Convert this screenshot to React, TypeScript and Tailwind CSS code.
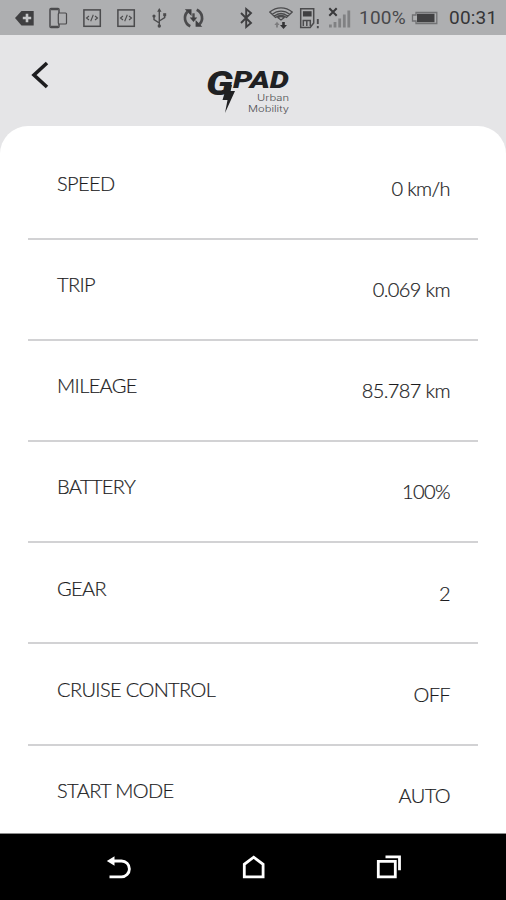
import type { ReactNode } from "react";

interface Reading {
  label: string;
  value: string;
}

const READINGS: Reading[] = [
  { label: "SPEED", value: "0 km/h" },
  { label: "TRIP", value: "0.069 km" },
  { label: "MILEAGE", value: "85.787 km" },
  { label: "BATTERY", value: "100%" },
  { label: "GEAR", value: "2" },
  { label: "CRUISE CONTROL", value: "OFF" },
  { label: "START MODE", value: "AUTO" },
];

function StatusIcon({ children, className = "" }: { children: ReactNode; className?: string }) {
  return (
    <svg
      viewBox="0 0 24 24"
      className={`h-6 w-6 shrink-0 ${className}`}
      fill="none"
      stroke="#4b4b4d"
      strokeWidth="1.5"
    >
      {children}
    </svg>
  );
}

function CodeIcon() {
  return (
    <StatusIcon>
      <rect x="3.9" y="3.9" width="16.4" height="16.4" />
      <path d="M9 10l-2.5 2L9 14M15 10l2.5 2L15 14M13.3 8.8l-2.6 6.4" strokeWidth="1.1" />
    </StatusIcon>
  );
}

function StatusBar() {
  return (
    <div className="flex h-[35px] items-center bg-[#aeafb1] pl-3 font-[Roboto,sans-serif] text-[#48484a]">
      <div className="flex gap-[10px]">
        <StatusIcon>
          <path d="M3 12l6.5-7H21.7v14.5H9.5z" fill="#3f3f41" stroke="none" />
          <path d="M15 7.8v8.4M10.8 12h8.4" stroke="#c4c5c7" strokeWidth="2.6" />
        </StatusIcon>
        <StatusIcon>
          <path d="M13 7V3.5a1 1 0 0 0-1-1H5a1 1 0 0 0-1 1v17a1 1 0 0 0 1 1h7a1 1 0 0 0 1-1V18" />
          <path d="M5 3.2h7M5 20.8h7" strokeWidth="2" />
          <rect x="12.3" y="7" width="8.2" height="11" rx="1" strokeWidth="1.2" />
        </StatusIcon>
        <CodeIcon />
        <CodeIcon />
        <StatusIcon>
          <path d="M11.3 4v16M11.3 17l-5.3-3.3V10M11.3 15l5.4-3.3V8.5" strokeWidth="1.4" />
          <path d="M11.3 2l-2.2 3.7h4.4z" fill="#4b4b4d" stroke="none" />
          <circle cx="11.3" cy="20" r="1.7" fill="#4b4b4d" stroke="none" />
          <circle cx="6" cy="10" r="1.6" fill="#4b4b4d" stroke="none" />
          <path d="M15.2 7.2h3v3h-3z" fill="#4b4b4d" stroke="none" />
        </StatusIcon>
        <StatusIcon>
          <path d="M8.3 20.2A9 9 0 0 1 5.5 5.7M14.7 3.8a9 9 0 0 1 2.8 14.5" strokeWidth="2.7" />
          <path d="M2.8 3.2H9.5V9.9zM20.3 20.8h-6.7V14.1z" fill="#3f3f41" stroke="none" />
          <path d="M11.5 7.3v5" strokeWidth="2.4" />
          <path d="M7.8 11.5h7.4L11.5 16z" fill="#3f3f41" stroke="none" />
        </StatusIcon>
      </div>

      <StatusIcon className="ml-[28px]">
        <path d="M7 7l10 10-4.8 4V3L17 7 7 17" stroke="#3f3f41" strokeWidth="1.9" />
      </StatusIcon>
      <StatusIcon className="ml-[11px]">
        <path
          d="M.8 6C7.5.5 16.5.5 23.2 6L17.5 11.5Q12 7.5 6.5 11.5zM3.2 8.3C8.5 4 15.5 4 20.8 8.3M5 10.2c4.5-3.5 9.500-3.5 14 0M9 11.8c1.8-1.5 4.2-1.5 6 0L12 14z"
          strokeWidth="1.3"
        />
        <path d="M8 21.5V18" stroke="#7c7c7e" strokeWidth="1.8" />
        <path d="M5.4 19h5.2L8 15.8z" fill="#7c7c7e" stroke="none" />
        <path d="M11 19h7l-3.5 4z" fill="#333335" stroke="none" />
        <path d="M14.5 16v4" stroke="#333335" strokeWidth="2.6" />
      </StatusIcon>
      <StatusIcon className="ml-[5px]">
        <path d="M2.7 2.7h13v14.3l-3.5 4.5H2.7z" strokeWidth="1.5" />
        <path d="M4.9 5.2h8.7v5.3H4.9z" fill="#3f3f41" stroke="none" />
        <path d="M5.3 20v-5.5h7V20M8.8 14.5V20" strokeWidth="1.5" />
        <path d="M19.8 13v5M19.8 20v2.2" strokeWidth="1.9" />
      </StatusIcon>
      <StatusIcon className="ml-[5px]">
        <path d="M2.3 2.3l7.4 7.4M9.7 2.3L2.3 9.7" stroke="#39393b" strokeWidth="2" />
        <path
          d="M3.4 18.5v3M8 16v5.5M12.7 12.5v9M17.3 8.5v13M21.8 4.5v17"
          stroke="#808183"
          strokeWidth="2.8"
        />
      </StatusIcon>

      <span className="mt-0.5 ml-2 w-[49px] text-[19px] tracking-[0.2px] whitespace-nowrap">100%</span>
      <svg viewBox="0 0 28 14" className="ml-[3px] h-[14px] w-7 shrink-0" fill="none">
        <path d="M5 1.5h20.8v11H5V10H1.5V4H5z" stroke="#717274" strokeWidth="1.3" />
        <path d="M6 2.8h17.5v8.4H6z" fill="#414143" />
      </svg>
      <span className="mt-0.5 ml-[10px] text-[19px] tracking-[0.2px] whitespace-nowrap text-[#353537]">
        00:31
      </span>
    </div>
  );
}

function Logo() {
  return (
    <svg viewBox="0 0 90 52" className="h-[52px] w-[90px]" fill="#202123">
      <g fontFamily="Roboto, sans-serif" fontWeight="900" fontStyle="italic">
        <text x="2" y="30" fontSize="33" textLength="27" lengthAdjust="spacingAndGlyphs">
          G
        </text>
        <text x="29" y="22.5" fontSize="24" textLength="56" lengthAdjust="spacingAndGlyphs">
          PAD
        </text>
      </g>
      {/* lightning bolt hanging from the G */}
      <path d="M23 20h5l-1.500 6H31L21 48l2.500-13H18.500z" />
      <g fontFamily="Inter, sans-serif" fontWeight="300" fill="#4f4f52">
        <text x="53" y="36" fontSize="9" textLength="32" lengthAdjust="spacingAndGlyphs">
          Urban
        </text>
        <text x="44" y="46.9" fontSize="9" textLength="41" lengthAdjust="spacingAndGlyphs">
          Mobility
        </text>
      </g>
    </svg>
  );
}

function Header() {
  return (
    <header className="flex h-[91px] items-start">
      <button aria-label="Back" className="mt-[24px] ml-[28px]">
        <svg viewBox="0 0 24 32" className="h-8 w-6" fill="none" stroke="#1d1d1f" strokeWidth="3.6">
          <path d="M19 4L6 16l13 12" />
        </svg>
      </button>
      <div className="mt-[30px] ml-[152px]">
        <Logo />
      </div>
    </header>
  );
}

function ReadingRow({ label, value }: Reading) {
  return (
    <li className="flex h-[101.2px] shrink-0 items-start justify-between border-b-2 border-[#d2d2d4] pr-7 pl-[29px] text-[20px] leading-6 font-light tracking-[-0.62px] text-[#1c1c1e] [-webkit-text-stroke:0.2px_#1c1c1e] last:border-b-0">
      <span className="mt-[32.5px]">{label}</span>
      <span className="mt-[37.5px]">{value}</span>
    </li>
  );
}

function NavBar() {
  return (
    <nav className="flex h-[67px] shrink-0 items-center border-t border-[#8c8c8c] bg-black pl-[105px]">
      <svg viewBox="0 0 28 28" className="h-7 w-7" fill="none" stroke="#fff" strokeWidth="2.8">
        <path d="M8 8h8.5a7.9 7.9 0 0 1 0 15.8H4.5" />
        <path d="M1.8 8l7.7-4.7v9.4z" fill="#fff" stroke="none" />
      </svg>
      <svg viewBox="0 0 28 28" className="ml-[107px] h-7 w-7" fill="none" stroke="#fff" strokeWidth="2.8">
        <path d="M4.3 23.8V11.3L13.7 4.2l9.4 7.1v12.5z" />
      </svg>
      <svg viewBox="0 0 28 28" className="ml-[106px] h-7 w-7" fill="none" stroke="#fff" strokeWidth="2.8">
        <path d="M4.3 8.3h17v15.5h-17z" />
        <path d="M11.5 3.8h14v13.5" />
      </svg>
    </nav>
  );
}

export default function App() {
  return (
    <div className="flex h-[900px] w-[506px] flex-col overflow-hidden bg-[#e5e5e7]">
      <StatusBar />
      <Header />
      <main className="min-h-0 flex-1 overflow-hidden rounded-t-[28px] bg-white px-7 pt-[12.4px] font-[Lato,sans-serif]">
        <ul className="flex flex-col">
          {READINGS.map((reading) => (
            <ReadingRow key={reading.label} {...reading} />
          ))}
        </ul>
      </main>
      <NavBar />
    </div>
  );
}
